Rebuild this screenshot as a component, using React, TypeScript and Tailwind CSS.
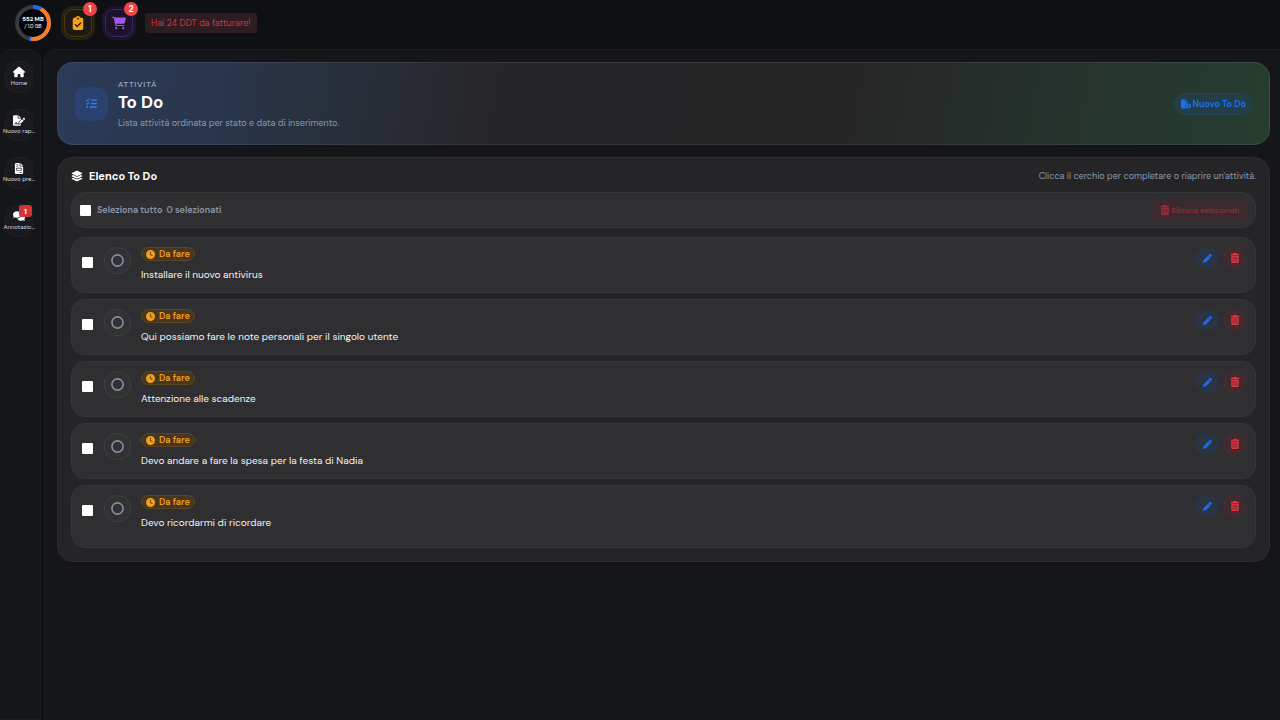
import { useState } from "react";
import type { ReactNode } from "react";
import {
  FaCartShopping,
  FaClipboardCheck,
  FaClock,
  FaComments,
  FaFileCirclePlus,
  FaFileInvoice,
  FaFileSignature,
  FaHouse,
  FaLayerGroup,
  FaListCheck,
  FaPen,
  FaTrashCan,
} from "react-icons/fa6";

const TASKS = [
  "Installare il nuovo antivirus",
  "Qui possiamo fare le note personali per il singolo utente",
  "Attenzione alle scadenze",
  "Devo andare a fare la spesa per la festa di Nadia",
  "Devo ricordarmi di ricordare",
];

function StorageRing() {
  return (
    <div className="relative size-9 shrink-0">
      <svg viewBox="0 0 36 36" className="size-9 -rotate-90" fill="none" aria-hidden="true">
        <circle cx="18" cy="18" r="18" fill="#050608" />
        <circle cx="18" cy="18" r="16" stroke="#3a3b3f" strokeWidth="4" />
        <circle cx="18" cy="18" r="16" stroke="#2563eb" strokeWidth="4" pathLength="100" strokeDasharray="54 46" />
        <circle cx="18" cy="18" r="16" stroke="#f97b22" strokeWidth="4" pathLength="100" strokeDasharray="44 56" strokeDashoffset="-8" />
      </svg>
      <div className="absolute inset-0 flex flex-col items-center justify-center text-[6px] leading-[7px] text-white">
        <span className="font-bold">552 MB</span>
        <span className="text-[5px]">/ 1.0 GB</span>
      </div>
    </div>
  );
}

function CountBadge({ children }: { children: ReactNode }) {
  return (
    <span className="absolute -top-1.5 -right-1 flex size-3.5 items-center justify-center rounded-full bg-[#ef4444] pt-px text-[9px] leading-none font-bold text-white">
      {children}
    </span>
  );
}

function TopBar() {
  return (
    <header className="flex h-[45px] items-center gap-2 pl-[15px]">
      <StorageRing />
      <div className="flex items-center gap-1.5">
        <button
          type="button"
          aria-label="Attività"
          className="relative ml-0.5 flex size-[34px] items-center justify-center rounded-xl border-2 border-[#2b2110] bg-[#1f1a11] text-[#f5a11a] outline outline-1 -outline-offset-4 outline-[#4f3911]"
        >
          <FaClipboardCheck className="size-3.5" />
          <CountBadge>1</CountBadge>
        </button>
        <button
          type="button"
          aria-label="Ordini"
          className="relative ml-px flex size-[34px] items-center justify-center rounded-xl border-2 border-[#20132f] bg-[#1b1329] text-[#a855f7] outline outline-1 -outline-offset-4 outline-[#422663]"
        >
          <FaCartShopping className="size-3.5" />
          <CountBadge>2</CountBadge>
        </button>
      </div>
      <a href="#ddt" className="ml-px flex h-5 items-center rounded-[3px] bg-[#2d1c20] px-1.5 text-[9px] leading-[12px] text-[#cf3545]">
        Hai 24 DDT da fatturare!
      </a>
    </header>
  );
}

function SideLink({ icon, label, badge }: { icon: ReactNode; label: string; badge?: string }) {
  return (
    <a
      href="#nav"
      className="relative flex h-8 w-7 flex-col items-center justify-center gap-0.5 rounded-[10px] border border-[#1e1f22] bg-[#1a1b1e] pb-0.5 text-[6px] leading-[6px] whitespace-nowrap text-[#dcdde0]"
    >
      <span className="text-[12px] leading-[14px] text-white">{icon}</span>
      <span>{label}</span>
      {badge && (
        <span className="absolute -top-px right-0 flex h-3 w-[13px] items-center justify-center rounded-[3px] bg-[#d13438] text-[8px] leading-none font-bold text-white">
          {badge}
        </span>
      )}
    </a>
  );
}

function SideBar() {
  return (
    <nav className="flex w-[41px] shrink-0 flex-col items-center gap-4 rounded-t-xl border border-l-0 border-[#1c1d21] bg-[#15161a] pt-[11px] pr-[2px]">
      <SideLink icon={<FaHouse className="h-3" />} label="Home" />
      <SideLink icon={<FaFileSignature className="h-[11px]" />} label="Nuovo rap…" />
      <SideLink icon={<FaFileInvoice className="h-[11px]" />} label="Nuovo pre…" />
      <SideLink icon={<FaComments className="h-3" />} label="Annotazio…" badge="1" />
    </nav>
  );
}

function Hero() {
  return (
    <section className="flex h-[83px] items-center gap-2.5 rounded-2xl border border-white/8 bg-[linear-gradient(100deg,#2b3b59_0%,#29354a_14%,#282d37_26%,#262628_36%,#262627_66%,#26332d_83%,#263d2f_100%)] px-4">
      <div className="flex size-[34px] items-center justify-center rounded-xl bg-[#2b4270] text-[#3b7bec]">
        <FaListCheck className="size-[11px]" />
      </div>
      <div className="flex-1">
        <p className="text-[8px] leading-[10px] font-medium tracking-widest text-[#a3adbd]">ATTIVITÀ</p>
        <h1 className="mt-1 text-[17px] leading-[18px] font-bold text-white">To Do</h1>
        <p className="mt-1.5 text-[9px] leading-[12px] text-[#8b98ad]">Lista attività ordinata per stato e data di inserimento.</p>
      </div>
      <button
        type="button"
        className="flex h-[22px] items-center gap-0.5 rounded-full border border-[#214458] bg-[#233d49] px-1.5 text-[9px] leading-[12px] font-semibold text-[#1a73f0]"
      >
        <FaFileCirclePlus className="size-[10px]" />
        Nuovo To Do
      </button>
    </section>
  );
}

function Tick({ label, checked, onChange }: { label: string; checked: boolean; onChange: () => void }) {
  return (
    <input
      type="checkbox"
      aria-label={label}
      checked={checked}
      onChange={onChange}
      className="size-[11px] shrink-0 appearance-none rounded-[1px] bg-white checked:bg-[#1a73f0]"
    />
  );
}

function TaskRow({ title, checked, onToggle }: { title: string; checked: boolean; onToggle: () => void }) {
  return (
    <li className="flex min-h-14 items-start rounded-[14px] border border-[#37373a] bg-[#2f2f31] pt-[9px] pr-[9px] pl-2.5 last:min-h-[63px]">
      <div className="mt-[10px] mr-[11px] flex">
        <Tick label={title} checked={checked} onChange={onToggle} />
      </div>
      <button
        type="button"
        aria-label={"Completa: " + title}
        className="mr-2.5 flex size-[27px] items-center justify-center rounded-xl border border-[#3e3e41] bg-[#323234] text-[#8490a3]"
      >
        <svg viewBox="0 0 13 13" className="size-[13px]" fill="none" stroke="currentColor" strokeWidth="1.6" aria-hidden="true">
          <circle cx="6.5" cy="6.5" r="5.6" />
        </svg>
      </button>
      <div className="min-w-0 flex-1">
        <span className="flex h-[14px] w-[54px] items-center gap-1 rounded-full border border-[#5c4420] bg-[#463720] pl-1 text-[9px] leading-[12px] font-semibold text-[#f59e1b]">
          <FaClock className="size-[9px]" />
          Da fare
        </span>
        <p className="mt-[7px] text-[10px] leading-[14px] text-[#f2f2f3]">{title}</p>
      </div>
      <div className="flex gap-1">
        <button
          type="button"
          aria-label="Modifica"
          className="flex h-[22px] w-6 items-center justify-center rounded-full border border-[#28364b] bg-[#293444] text-[#1f6ae6]"
        >
          <FaPen className="size-[9px]" />
        </button>
        <button
          type="button"
          aria-label="Elimina"
          className="flex h-[22px] w-[23px] items-center justify-center rounded-full border border-[#4b2a30] bg-[#402a2e] text-[#d93646]"
        >
          <FaTrashCan className="size-[10px]" />
        </button>
      </div>
    </li>
  );
}

function TaskPanel() {
  const [selected, setSelected] = useState<number[]>([]);
  const all = selected.length === TASKS.length;
  const toggle = (i: number) =>
    setSelected((s) => (s.includes(i) ? s.filter((x) => x !== i) : [...s, i]));

  return (
    <section className="rounded-2xl border border-[#2e2e31] bg-[#252527] px-[13px] pt-2.5 pb-[13px]">
      <div className="flex h-4 items-center justify-between">
        <h2 className="flex items-center gap-1.5 text-[11px] leading-[14px] font-bold text-white">
          <FaLayerGroup className="size-3" />
          Elenco To Do
        </h2>
        <p className="text-[9px] leading-[12px] text-[#8b98ad]">Clicca il cerchio per completare o riaprire un'attività.</p>
      </div>
      <div className="mt-2 flex h-9 items-center rounded-[14px] border border-[#37373a] bg-[#2f2f31] px-2 text-[9px] leading-[12px] font-semibold text-[#8b98ad]">
        <label className="flex items-center gap-1.5">
          <Tick label="Seleziona tutto" checked={all} onChange={() => setSelected(all ? [] : TASKS.map((_, i) => i))} />
          Seleziona tutto
        </label>
        <span className="ml-1 flex-1">{selected.length} selezionati</span>
        <button
          type="button"
          disabled={selected.length === 0}
          className="flex h-[22px] items-center gap-0.5 rounded-[3px] bg-[#3a2a2e] px-2 text-[8px] leading-[12px] font-normal text-[#a22c39]"
        >
          <FaTrashCan className="size-[10px]" />
          Elimina selezionati
        </button>
      </div>
      <ul className="mt-[9px] flex flex-col gap-1.5">
        {TASKS.map((title, i) => (
          <TaskRow key={title} title={title} checked={selected.includes(i)} onToggle={() => toggle(i)} />
        ))}
      </ul>
    </section>
  );
}

export default function App() {
  return (
    <div className="flex min-h-screen flex-col bg-[#0f1013] font-['DM_Sans','Inter',sans-serif]">
      <TopBar />
      <div className="mt-1 flex flex-1 gap-[3px]">
        <SideBar />
        <main className="flex flex-1 flex-col gap-3 rounded-tl-xl border-t border-l border-[#1c1d21] bg-[#15161a] pt-3 pr-2.5 pl-3">
          <Hero />
          <TaskPanel />
        </main>
      </div>
    </div>
  );
}
